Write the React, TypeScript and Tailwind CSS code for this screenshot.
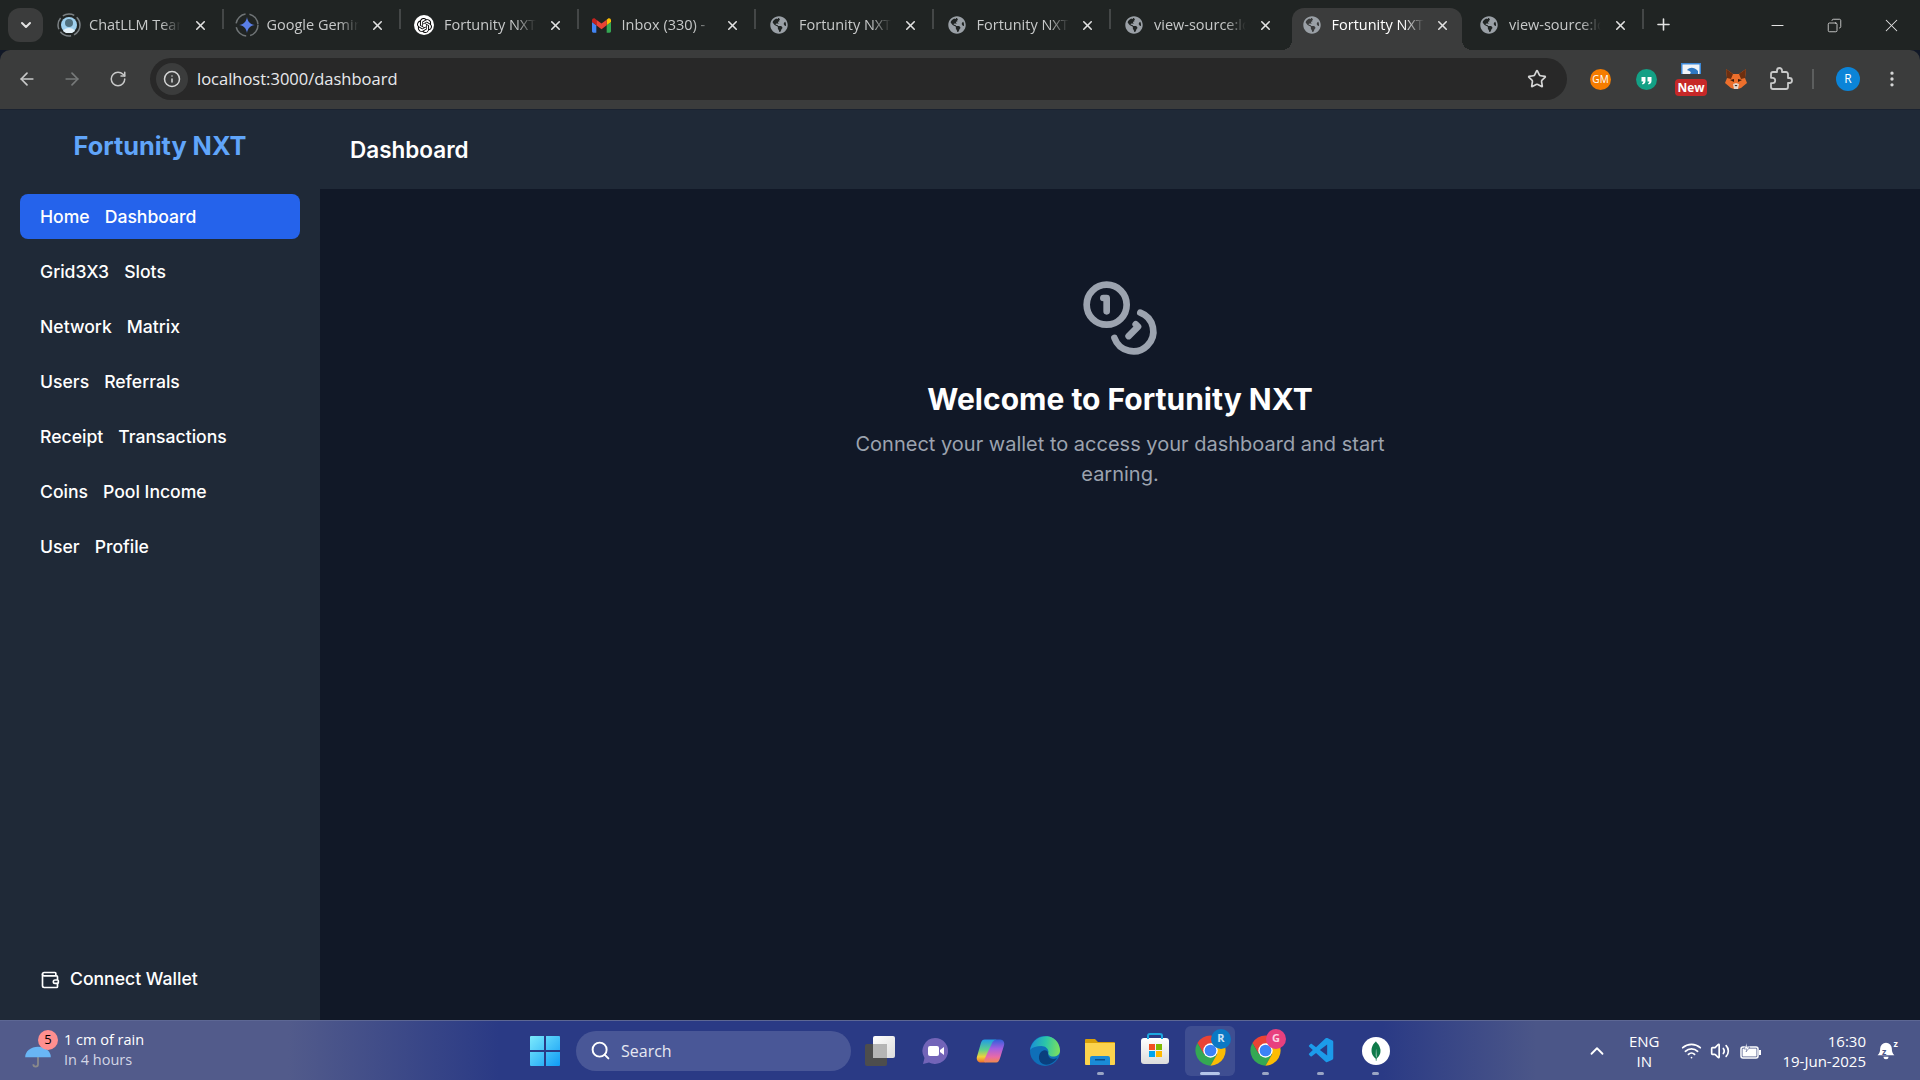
import { ArrowLeft, ArrowRight, ChevronDown, ChevronUp, Coins, Copy, EllipsisVertical, Info, Minus, Plus, RotateCw, Search, Star, Volume2, Wallet, Wifi, X } from "lucide-react";
import { FaGlobeAmericas } from "react-icons/fa";
import { SiMongodb, SiOpenai } from "react-icons/si";
import { VscVscode } from "react-icons/vsc";

const ChatIcon = () => (
  <svg width="24" height="24" viewBox="0 0 24 24">
    <circle cx="12" cy="12" r="11" fill="none" stroke="#7b8184" strokeWidth="1.5" strokeDasharray="12 3" />
    <circle cx="12" cy="12" r="8" fill="#9fd0ee" />
    <circle cx="12" cy="10" r="4" fill="#50707f" />
    <path d="M6 18c2-4 10-4 12 0l-3 2H9z" fill="#e5f1f8" />
  </svg>
);

const GeminiIcon = () => (
  <svg width="24" height="24" viewBox="0 0 24 24">
    <circle cx="12" cy="12" r="11" fill="none" stroke="#6f7476" strokeWidth="1.5" strokeDasharray="14 4" />
    <path d="M12 4c.6 4.600 3.400 7.400 8 8-4.600.6-7.400 3.400-8 8-.6-4.600-3.400-7.400-8-8 4.600-.6 7.400-3.400 8-8z" fill="#5a7fe8" />
  </svg>
);

const OpenAiIcon = () => (
  <span className="flex h-5 w-5 items-center justify-center rounded-full bg-white text-black">
    <SiOpenai size={15} />
  </span>
);

const GmailIcon = () => (
  <svg width="19" height="19" viewBox="0 0 24 24">
    <path d="M1.636 21h3.818v-9.273L0 7.636v11.727C0 20.267.733 21 1.636 21z" fill="#4285f4" />
    <path d="M18.545 21h3.818c.905 0 1.637-.733 1.637-1.636V7.636l-5.455 4.091" fill="#34a853" />
    <path d="M18.545 4.636v7.091L24 7.636V5.455c0-2.023-2.309-3.178-3.927-1.964" fill="#fbbc04" />
    <path d="M5.455 11.727V4.636L12 9.545l6.545-4.909v7.091L12 16.636" fill="#ea4335" />
    <path d="M0 5.455v2.181l5.455 4.091V4.636L3.927 3.491C2.309 2.277 0 3.432 0 5.455z" fill="#c5221f" />
  </svg>
);

const GlobeIcon = () => <FaGlobeAmericas size={18} className="text-[#9aa0a6]" />;

const tabs = [
  { title: "ChatLLM Team", icon: <ChatIcon /> },
  { title: "Google Gemini", icon: <GeminiIcon /> },
  { title: "Fortunity NXT", icon: <OpenAiIcon /> },
  { title: "Inbox (330) - ", icon: <GmailIcon /> },
  { title: "Fortunity NXT", icon: <GlobeIcon /> },
  { title: "Fortunity NXT", icon: <GlobeIcon /> },
  { title: "view-source:localhost", icon: <GlobeIcon /> },
  { title: "Fortunity NXT", icon: <GlobeIcon />, active: true },
  { title: "view-source:localhost", icon: <GlobeIcon /> },
];

const navItems = [
  ["Home", "Dashboard"],
  ["Grid3X3", "Slots"],
  ["Network", "Matrix"],
  ["Users", "Referrals"],
  ["Receipt", "Transactions"],
  ["Coins", "Pool Income"],
  ["User", "Profile"],
];

const ChromeLogo = ({ badge, badgeClass }: { badge: string; badgeClass: string }) => (
  <span className="relative flex h-9 w-9 items-center justify-center">
    <svg width="33" height="33" viewBox="0 0 48 48">
      <path d="M43.050 13A22 22 0 0 0 4.950 13L14.500 29.500 24 13z" fill="#ea4335" />
      <path d="M4.950 13A22 22 0 0 0 24 46l9.500-16.500h-19z" fill="#34a853" />
      <path d="M24 46A22 22 0 0 0 43.050 13H24l9.500 16.500z" fill="#fbbc04" />
      <circle cx="24" cy="24" r="10.500" fill="#fff" />
      <circle cx="24" cy="24" r="8.500" fill="#3b82f6" />
    </svg>
    <span className={`absolute -right-[3px] -top-[4px] flex h-5 w-5 items-center justify-center rounded-full text-[11px] font-bold ${badgeClass}`}>{badge}</span>
  </span>
);

const TaskIcon = ({ children, dot, active }: { children: React.ReactNode; dot?: boolean; active?: boolean }) => (
  <div className={`relative flex h-[50px] w-[50px] items-center justify-center rounded-md ${active ? "bg-white/10" : ""}`}>
    {children}
    {dot && <span className={`absolute bottom-[1px] h-[3px] rounded-full ${active ? "w-5 bg-[#b6c5ea]" : "w-[7px] bg-[#9aa5c4]"}`} />}
  </div>
);

export default function App() {
  return (
    <div className="flex h-screen w-full flex-col overflow-hidden bg-[#111827] font-['Inter',sans-serif] text-white">
      {/* browser tabs */}
      <div className="flex h-[50px] shrink-0 items-center bg-[#202423] font-['Open_Sans',sans-serif] text-[#c7c9c9]">
        <div className="ml-2 flex h-[34px] w-[35px] items-center justify-center rounded-xl bg-[#3b3c3c]">
          <ChevronDown size={16} strokeWidth={3} className="text-[#e3e3e3]" />
        </div>
        <div className="ml-[3px] flex h-full items-end">
          {tabs.map((tab, i) => (
            <div key={i} className={`relative flex h-[42px] w-[177.500px] shrink-0 items-center pb-2 pl-[11px] pr-4 ${tab.active ? "text-white" : ""}`}>
              {tab.active && (
                <>
                  <span className="absolute bottom-0 left-[3px] right-[4px] top-0 rounded-t-[12px] bg-[#3b3c3c]" />
                  <span className="absolute bottom-0 left-[-7px] h-[10px] w-[10px] bg-[radial-gradient(circle_at_0_0,transparent_10px,#3b3c3c_10px)]" />
                  <span className="absolute bottom-0 right-[-6px] h-[10px] w-[10px] bg-[radial-gradient(circle_at_100%_0,transparent_10px,#3b3c3c_10px)]" />
                </>
              )}
              <span className="relative flex w-6 shrink-0 justify-center">{tab.icon}</span>
              <span className="relative ml-[8px] w-[92px] overflow-hidden whitespace-nowrap text-[14.500px] [mask-image:linear-gradient(to_right,black_78%,transparent)]">{tab.title}</span>
              <X size={15} strokeWidth={2.5} className="relative ml-auto shrink-0 text-[#e2e2e2]" />
              {!tab.active && i !== 6 && <span className="absolute right-0 top-[1px] h-5 w-[2px] bg-[#444747]" />}
            </div>
          ))}
        </div>
        <div className="ml-[10px] flex h-full items-center pb-[2px]">
          <Plus size={19} strokeWidth={2} className="text-[#e3e3e3]" />
        </div>
        <div className="ml-auto flex items-center pr-[18px] text-[#e3e3e3]">
          <Minus size={19} strokeWidth={1.3} />
          <Copy size={15} strokeWidth={1.3} className="ml-[40px] -scale-x-100" />
          <X size={21} strokeWidth={1.2} className="ml-[39px]" />
        </div>
      </div>

      {/* browser toolbar */}
      <div className="flex h-[59px] shrink-0 items-center rounded-t-[10px] bg-[#3b3c3c] pb-[1px] font-['Open_Sans',sans-serif]">
        <div className="flex w-[150px] items-center pl-[17px] text-[#c8c9c9]">
          <ArrowLeft size={20} />
          <ArrowRight size={20} className="ml-[25px] text-[#777a7a]" />
          <RotateCw size={18} className="ml-[27px]" />
        </div>
        <div className="flex h-[42px] w-[1417px] items-center rounded-full bg-[#282828] pl-[6px] pr-[20px]">
          <div className="flex h-[32px] w-[32px] items-center justify-center rounded-full bg-[#3b3c3c]">
            <Info size={18} className="text-[#d5d6d6]" />
          </div>
          <span className="ml-[9px] text-[16.500px] text-[#e8eaed]">localhost:3000/dashboard</span>
          <Star size={20} className="ml-auto text-[#d5d6d6]" />
        </div>
        <div className="ml-[23px] flex flex-1 items-center">
          <span className="flex h-[21px] w-[21px] items-center justify-center rounded-full bg-[#f57c00] text-[10px] text-white">GM</span>
          <svg width="21" height="21" viewBox="0 0 21 21" className="ml-[25px]">
            <circle cx="10.500" cy="10.500" r="10.500" fill="#13a085" />
            <path d="M5.500 8h4v4c0 2-1 3-3 3.500l-.5-1.200c1-.4 1.300-1 1.300-1.800H5.500zM11.500 8h4v4c0 2-1 3-3 3.500l-.5-1.200c1-.4 1.300-1 1.300-1.800h-1.800z" fill="#fff" />
          </svg>
          <span className="relative ml-[19px] flex h-7 w-[30px] flex-col items-center">
            <svg width="20" height="11" viewBox="0 0 20 11" className="mt-[-2px]">
              <rect width="20" height="11" fill="#3d89d6" />
              <rect x="1.500" y="1.500" width="17" height="9.500" fill="#f1f4f7" />
              <path d="M6 7c3-3 7-3 11 1v3H9c2-2 0-3-3-4z" fill="#2f78c2" />
            </svg>
            <span className="absolute bottom-[-3px] rounded-[4px] bg-[#c62828] px-[2px] text-[12px] font-bold leading-[17px] text-white">New</span>
          </span>
          <svg width="24" height="24" viewBox="0 0 24 24" className="ml-[18px]">
            <path d="M2 2l7 5h6l7-5-1 9 2 5-6 5-3 1h-4l-3-1-6-5 2-5z" fill="#ec6f2c" />
            <path d="M2 2l7 5-2 5-4-1z" fill="#6d2f10" />
            <path d="M22 2l-7 5 2 5 4-1z" fill="#6d2f10" />
            <path d="M6 13l4-1v3z M18 13l-4-1v3z" fill="#3a1d0c" />
            <path d="M9 17l3-1 3 1-1 5h-4z" fill="#e4d6cb" />
            <path d="M10.500 18h3l-1.500 1.500z" fill="#2a1a10" />
          </svg>
          <svg width="24" height="24" viewBox="0 0 24 24" className="ml-[21px]" fill="none" stroke="#c8c9c9" strokeWidth="1.800" strokeLinejoin="round">
            <path d="M20.500 11H19V7c0-1.100-.9-2-2-2h-4V3.500C13 2.120 11.880 1 10.500 1S8 2.120 8 3.500V5H4c-1.100 0-1.990.9-1.990 2v3.800H3.500c1.490 0 2.700 1.210 2.700 2.700s-1.210 2.700-2.700 2.700H2V20c0 1.100.9 2 2 2h13c1.100 0 2-.9 2-2v-4h1.500c1.380 0 2.500-1.120 2.500-2.500S21.880 11 20.500 11z" />
          </svg>
          <span className="ml-[19px] h-5 w-[2px] bg-[#5c5e5e]" />
          <span className="ml-[22px] flex h-6 w-6 items-center justify-center rounded-full bg-[#0b84d8] text-[12px] text-white">R</span>
          <EllipsisVertical size={20} className="ml-[22px] text-[#d5d6d6]" />
        </div>
      </div>

      {/* app */}
      <div className="flex min-h-0 flex-1 border-t border-[#1a2230]">
        <aside className="flex w-[320px] shrink-0 flex-col bg-[#1f2937] px-5 pb-[18px]">
          <div className="flex h-[84px] shrink-0 items-start justify-center pt-[17px] text-[25.300px] font-bold text-[#60a5fa]">Fortunity NXT</div>
          <nav className="flex flex-col gap-[10px]">
            {navItems.map(([icon, label], i) => (
              <a key={label} className={`flex h-[45px] items-center gap-[15px] rounded-lg px-5 pt-[2px] text-[17.600px] font-medium ${i === 0 ? "bg-[#2563eb]" : ""}`}>
                <span>{icon}</span>
                <span>{label}</span>
              </a>
            ))}
          </nav>
          <button className="mt-auto flex h-[45px] items-center gap-[10px] px-5 text-[17.600px] font-medium">
            <Wallet size={20} />
            Connect Wallet
          </button>
        </aside>
        <div className="flex min-w-0 flex-1 flex-col">
          <header className="flex h-[79px] shrink-0 items-center bg-[#1f2937] px-[30px] text-[22.500px] font-semibold">Dashboard</header>
          <main className="flex flex-1 flex-col items-center pt-[89px]">
            <Coins size={80} className="text-[#9ca3af]" />
            <h1 className="mt-[23px] text-[30px] font-bold leading-[36px]">Welcome to Fortunity NXT</h1>
            <p className="mt-[12px] w-[576px] text-center text-xl leading-[30px] text-[#9ca3af]">Connect your wallet to access your dashboard and start earning.</p>
          </main>
        </div>
      </div>

      {/* windows taskbar */}
      <div className="flex h-[60px] shrink-0 items-center border-t border-[#5d6794] bg-[linear-gradient(to_right,#525b8b_15%,#2a3a85_26%,#2a3a85_72%,#4b5688_80%)] font-['Open_Sans',sans-serif]">
        <div className="flex w-[530px] shrink-0 items-center pb-[2px] pl-[24px]">
          <div className="relative h-10 w-10">
            <svg width="28" height="28" viewBox="0 0 24 24" className="absolute bottom-0 left-0">
              <path d="M12 9v10a2 2 0 0 1-4 0" fill="none" stroke="#8a8a8a" strokeWidth="1.500" />
              <path d="M1 13a11 9 0 0 1 22 0z" fill="#69b6f5" />
            </svg>
            <span className="absolute left-[14px] top-0 flex h-5 w-5 items-center justify-center rounded-full bg-[#ff8f8f] text-[13px] text-black">5</span>
          </div>
          <div className="text-[14.500px] leading-[20px]">
            <div className="font-medium">1 cm of rain</div>
            <div className="text-[#d2d6e6]">In 4 hours</div>
          </div>
        </div>
        <svg width="30" height="30" viewBox="0 0 30 30" className="shrink-0">
          <defs>
            <linearGradient id="win" x1="0" y1="0" x2="1" y2="1">
              <stop offset="0" stopColor="#7ceafc" />
              <stop offset="1" stopColor="#0f9bf5" />
            </linearGradient>
          </defs>
          <path d="M0 1a1 1 0 0 1 1-1h13v14H0zM16 0h13a1 1 0 0 1 1 1v13H16zM0 16h14v14H1a1 1 0 0 1-1-1zM16 16h14v13a1 1 0 0 1-1 1H16z" fill="url(#win)" />
        </svg>
        <div className="ml-[16px] flex h-10 w-[275px] shrink-0 items-center rounded-full bg-[#ffffff26] pl-[14px]">
          <Search size={21} strokeWidth={2.200} className="text-white" />
          <span className="ml-[10px] text-[16px] text-[#e6e8f2]">Search</span>
        </div>
        <div className="ml-[4px] flex shrink-0 gap-[5px]">
          <TaskIcon>
            <span className="relative h-[30px] w-[30px]">
              <span className="absolute bottom-0 left-0 h-[22px] w-[22px] rounded-[2px] bg-[#4d4d4d]" />
              <span className="absolute right-0 top-0 h-[22px] w-[22px] rounded-[2px] bg-gradient-to-br from-white to-[#dcdcdc]" />
              <span className="absolute left-[8px] top-[8px] h-[14px] w-[14px] bg-[#b5b5b5]" />
            </span>
          </TaskIcon>
          <TaskIcon>
            <svg width="30" height="30" viewBox="0 0 30 30">
              <path d="M15 2a13 13 0 1 1-6 24.500L3 28l1.500-6A13 13 0 0 1 15 2z" fill="#7264b8" />
              <rect x="8" y="10" width="11" height="10" rx="2" fill="#fff" />
              <path d="M20 14l4-3v8l-4-3z" fill="#fff" />
            </svg>
          </TaskIcon>
          <TaskIcon>
            <svg width="29" height="26" viewBox="0 0 30 26">
              <defs>
                <linearGradient id="copL" x1="0.500" y1="0" x2="0.500" y2="1">
                  <stop offset="0" stopColor="#1f9be8" />
                  <stop offset="0.45" stopColor="#5fd08c" />
                  <stop offset="0.75" stopColor="#f0d23a" />
                  <stop offset="1" stopColor="#ef6a2e" />
                </linearGradient>
                <linearGradient id="copR" x1="0.500" y1="0" x2="0.500" y2="1">
                  <stop offset="0" stopColor="#2f5fd8" />
                  <stop offset="0.4" stopColor="#a55fe0" />
                  <stop offset="0.75" stopColor="#e86aa8" />
                  <stop offset="1" stopColor="#f08a4a" />
                </linearGradient>
              </defs>
              <path d="M9 1h11c2 0 2 2 1 4l-7 15c-1 3-3 5-6 5H5c-3 0-5-3-4-6L5 5c1-3 2-4 4-4z" fill="url(#copL)" />
              <path d="M21 25H10c-2 0-2-2-1-4l7-15c1-3 3-5 6-5h3c3 0 5 3 4 6l-4 13c-1 3-2 5-4 5z" fill="url(#copR)" />
            </svg>
          </TaskIcon>
          <TaskIcon>
            <svg width="32" height="32" viewBox="0 0 32 32">
              <defs>
                <linearGradient id="edgeTop" x1="0" y1="0.500" x2="1" y2="0.600">
                  <stop offset="0" stopColor="#1a8fd8" />
                  <stop offset="0.5" stopColor="#2bc6a8" />
                  <stop offset="1" stopColor="#7ee05c" />
                </linearGradient>
              </defs>
              <circle cx="16" cy="16" r="15" fill="#0f6fb8" />
              <path d="M1 15C3 4 13 0 20 1.500c7 1.500 11 8 11 14 0 4-3 6-7 6-3 0-5.500-2-4.500-4.500 0-3-3-6-7-6-5 0-9 1-11.500 4z" fill="url(#edgeTop)" />
              <path d="M12 17c3-3 7-2 7 1 0 6 5 7 9 5-3 5-9 8-14 6-5-2-5-9-2-12z" fill="#0a3f7e" />
            </svg>
          </TaskIcon>
          <TaskIcon dot>
            <svg width="30" height="28" viewBox="0 0 30 28">
              <path d="M0 3a1 1 0 0 1 1-1h9l3 3h16a1 1 0 0 1 1 1v3H0z" fill="#d9a008" />
              <path d="M0 6h30v21a1 1 0 0 1-1 1H1a1 1 0 0 1-1-1z" fill="#fcd34d" />
              <path d="M5 21a2 2 0 0 1 2-2h16a2 2 0 0 1 2 2v7H5z" fill="#1a8bd6" />
              <rect x="10" y="22" width="10" height="1.500" fill="#0a4e8a" />
            </svg>
          </TaskIcon>
          <TaskIcon>
            <span className="relative flex h-[26px] w-[28px] items-center justify-center rounded-[3px] bg-gradient-to-b from-white to-[#dcdcdc]">
              <span className="absolute -top-[5px] h-[6px] w-4 rounded-t-[3px] border-[2px] border-b-0 border-[#1da7e0]" />
              <span className="grid grid-cols-2 gap-[1px]">
                <span className="h-[6px] w-[6px] bg-[#f25022]" />
                <span className="h-[6px] w-[6px] bg-[#7fba00]" />
                <span className="h-[6px] w-[6px] bg-[#00a4ef]" />
                <span className="h-[6px] w-[6px] bg-[#ffb900]" />
              </span>
            </span>
          </TaskIcon>
          <TaskIcon dot active>
            <ChromeLogo badge="R" badgeClass="bg-[#0b78c4] text-[#c9e4f7]" />
          </TaskIcon>
          <TaskIcon dot>
            <ChromeLogo badge="G" badgeClass="bg-[#e8407e] text-[#fbd3e3]" />
          </TaskIcon>
          <TaskIcon dot>
            <VscVscode size={30} className="ml-[3px] text-[#1c9bea]" />
          </TaskIcon>
          <TaskIcon dot>
            <span className="ml-[2px] flex h-[28px] w-[28px] items-center justify-center rounded-full bg-white">
              <SiMongodb size={20} className="text-[#0f7a4a]" />
            </span>
          </TaskIcon>
        </div>
        <div className="ml-auto flex shrink-0 items-center pr-[22px] text-[15px]">
          <ChevronUp size={22} strokeWidth={2} />
          <div className="ml-[21px] text-center leading-[20px]">
            <div>ENG</div>
            <div>IN</div>
          </div>
          <Wifi size={21} className="ml-[22px]" />
          <Volume2 size={20} className="ml-[8px]" />
          <svg width="22" height="16" viewBox="0 0 22 16" className="ml-[10px]">
            <rect x="1" y="4" width="17" height="11" rx="2" fill="none" stroke="#fff" strokeWidth="1.500" />
            <rect x="2.500" y="5.500" width="14" height="8" fill="#fff" />
            <rect x="19" y="7" width="2" height="5" fill="#fff" />
            <path d="M7 0 4 6h3l-1 3 4-5H7z" fill="#fff" stroke="#4b5688" strokeWidth="0.500" />
          </svg>
          <div className="ml-[20px] text-right leading-[20px]">
            <div>16:30</div>
            <div>19-Jun-2025</div>
          </div>
          <span className="relative ml-[8px] flex h-6 w-6 items-center justify-center">
            <svg width="20" height="20" viewBox="0 0 24 24">
              <path d="M12 2a7 7 0 0 0-7 7c0 6-3 8-3 8h20s-3-2-3-8a7 7 0 0 0-7-7z M9 19a3 3 0 0 0 6 0z" fill="#fff" />
            </svg>
            <span className="absolute right-0 top-0 text-[9px] font-bold leading-none">z</span>
            <span className="absolute left-[8px] top-[8px] text-[9px] font-bold leading-none text-[#4b5688]">z</span>
          </span>
        </div>
      </div>
    </div>
  );
}
